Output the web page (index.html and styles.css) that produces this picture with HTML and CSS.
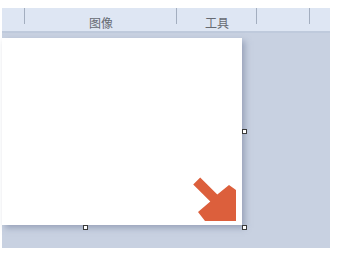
FILE: index.html
```html
<!DOCTYPE html>
<html>
<head>
<meta charset="utf-8">
<link rel="stylesheet" href="styles.css">
</head>
<body>
<div class="app">
  <div class="ribbon">
    <div class="grp g1"></div>
    <div class="grp g2"><span class="lbl">图像</span></div>
    <div class="grp g3"><span class="lbl">工具</span></div>
    <div class="grp g4"></div>
    <div class="grp g5"></div>
  </div>
  <div class="canvas">
    <div class="page">
      <svg class="arrow" width="240" height="187" viewBox="2 38 240 187">
        <polygon fill="#dc5f3c" points="200.2,177.5 217.3,194.6 229,185 236,190 236,221 205,221 198,212 210.3,201.6 193.2,184.5"/>
      </svg>
      <span class="handle h-right"></span>
      <span class="handle h-corner"></span>
      <span class="handle h-bottom"></span>
    </div>
  </div>
</div>
</body>
</html>
```
FILE: styles.css
```css
html, body {
  margin: 0;
  padding: 0;
  background: #ffffff;
}
body {
  width: 339px;
  height: 256px;
  overflow: hidden;
  font-family: "Noto Sans CJK SC", "Noto Sans", sans-serif;
}
.app {
  margin: 8px 0 0 2px;
  width: 328px;
  display: flex;
  flex-direction: column;
}
.ribbon {
  height: 23px;
  background: #dee6f3;
  border-bottom: 2px solid #bfcadc;
  display: flex;
}
.grp {
  position: relative;
  height: 23px;
  display: flex;
  justify-content: center;
  align-items: flex-end;
}
.grp::after {
  content: "";
  position: absolute;
  right: 0;
  top: 0;
  width: 1px;
  height: 16px;
  background: #a3aebf;
}
.g5::after { display: none; }
.g1 { width: 23px; }
.g2 { width: 152px; }
.g3 { width: 80px; }
.g4 { width: 53px; }
.g5 { width: 20px; }
.lbl {
  font-size: 12px;
  line-height: 15px;
  color: #666a72;
  padding-bottom: 1px;
}
.canvas {
  height: 215px;
  background: #c8d1e1;
  padding-top: 5px;
  box-sizing: border-box;
}
.page {
  position: relative;
  width: 240px;
  height: 187px;
  background: #ffffff;
  box-shadow: 3px 3px 6px rgba(105, 118, 148, 0.5);
}
.arrow {
  display: block;
}
.handle {
  position: absolute;
  width: 3px;
  height: 3px;
  background: #ffffff;
  border: 1px solid #3a3a3a;
}
.h-right { left: 240px; top: 91px; }
.h-corner { left: 240px; top: 187px; }
.h-bottom { left: 81px; top: 187px; }
```
